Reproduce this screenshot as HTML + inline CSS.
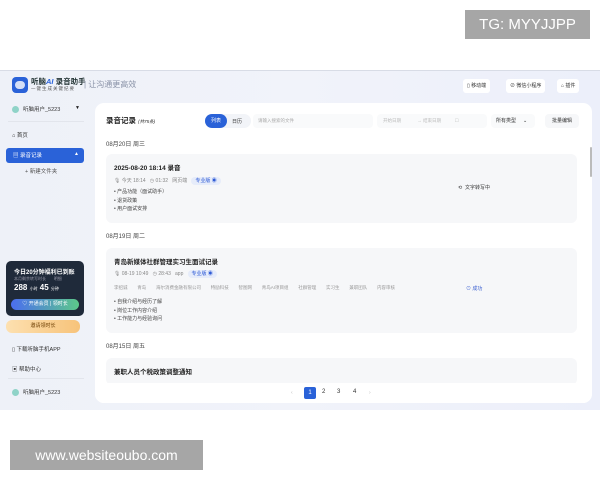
<!DOCTYPE html>
<html><head><meta charset="utf-8"><style>
*{margin:0;padding:0;box-sizing:border-box}
body{width:600px;height:480px;background:#fff;font-family:"Liberation Sans","Noto Sans CJK SC",sans-serif;position:relative;overflow:hidden;color:#222}
.a{position:absolute;white-space:nowrap}
.app{position:absolute;left:0;top:70px;width:600px;height:340px;background:linear-gradient(90deg,#eef1f8,#f1f3fa 50%,#eceffa);border-top:1px solid #d8dce6}
.card{position:absolute;left:95px;top:32px;width:497px;height:300px;background:#fff;border-radius:9px}
.rec{position:absolute;left:11px;width:471px;background:#f6f7f9;border-radius:6px}
.s{font-size:5px;color:#888}
.b{font-size:5px;color:#444}
.tag{background:#e6ecfa;color:#2f5bd6;border-radius:6px;padding:1px 4px;font-size:5px}
.pill{background:#fff;border-radius:3px;font-size:5px;color:#333;height:14px;line-height:14px;padding:0 4px}
</style></head><body>
<div class="a" style="left:465px;top:10px;width:125px;height:29px;background:#a6a6a6;color:#fff;font-size:15px;line-height:29px;text-align:center">TG: MYYJJPP</div>
<div class="a" style="left:10px;top:440px;width:193px;height:30px;background:#a6a6a6;color:#fff;font-size:14px;line-height:30px;text-align:center">www.websiteoubo.com</div>

<div class="app">
 <div class="a" style="left:12px;top:6px;width:16px;height:16px;background:#2a62d8;border-radius:4px"></div>
 <div class="a" style="left:15px;top:10px;width:10px;height:8px;background:#fff;border-radius:4px;opacity:.8"></div>
 <div class="a" style="left:31px;top:5px;font-size:7.5px;font-weight:bold;color:#233">听脑<i style="color:#2a62d8">AI</i> 录音助手</div>
 <div class="a" style="left:31px;top:15px;font-size:4.5px;color:#555;letter-spacing:1px">一键生成关键纪要</div>
 <div class="a" style="left:84px;top:8px;font-size:8px;color:#8a93a8">| 让沟通更高效</div>
 <div class="a pill" style="left:463px;top:8px">▯ 移动端</div>
 <div class="a pill" style="left:506px;top:8px">⊘ 微信小程序</div>
 <div class="a pill" style="left:557px;top:8px">⌂ 插件</div>

 <div class="a" style="left:12px;top:35px;width:7px;height:7px;border-radius:50%;background:#8fd3c8"></div>
 <div class="a" style="left:23px;top:34px;font-size:5.5px;color:#333">听脑用户_5223</div>
 <div class="a" style="left:75px;top:34px;font-size:5px">▼</div>
 <div class="a" style="left:8px;top:50px;width:76px;height:1px;background:#e2e5ec"></div>
 <div class="a" style="left:12px;top:60px;font-size:5.5px;color:#333">⌂ 首页</div>
 <div class="a" style="left:6px;top:77px;width:78px;height:15px;background:#2a62d8;border-radius:3px"></div>
 <div class="a" style="left:13px;top:80px;font-size:5.5px;color:#fff">▤ 录音记录</div>
 <div class="a" style="left:74px;top:80px;font-size:5px;color:#fff">▲</div>
 <div class="a" style="left:25px;top:96px;font-size:5.5px;color:#555">+ 新建文件夹</div>

 <div class="a" style="left:6px;top:190px;width:78px;height:55px;background:#1f2a3a;border-radius:5px"></div>
 <div class="a" style="left:14px;top:196px;font-size:6px;color:#fff;font-weight:bold">今日20分钟福利已到账</div>
 <div class="a" style="left:14px;top:205px;font-size:4px;color:#99a">本月剩余转写时长 &nbsp; &nbsp; &nbsp; 明细</div>
 <div class="a" style="left:14px;top:212px;font-size:8px;color:#fff;font-weight:bold">288 <span style="font-size:4px;font-weight:normal">小时</span> 45 <span style="font-size:4px;font-weight:normal">分钟</span></div>
 <div class="a" style="left:11px;top:228px;width:68px;height:11px;border-radius:6px;background:linear-gradient(90deg,#4b6ef0,#5cc88a);font-size:5px;color:#fff;text-align:center;line-height:11px">♡ 开通会员 | 领时长</div>
 <div class="a" style="left:6px;top:249px;width:74px;height:13px;border-radius:6px;background:linear-gradient(90deg,#fde0b0,#f7c37a);font-size:5px;color:#6b3d00;text-align:center;line-height:13px">邀请领时长</div>
 <div class="a" style="left:12px;top:274px;font-size:5.5px;color:#333">▯ 下载听脑手机APP</div>
 <div class="a" style="left:12px;top:294px;font-size:5.5px;color:#333">▣ 帮助中心</div>
 <div class="a" style="left:8px;top:307px;width:76px;height:1px;background:#e2e5ec"></div>
 <div class="a" style="left:12px;top:318px;width:7px;height:7px;border-radius:50%;background:#8fd3c8"></div>
 <div class="a" style="left:23px;top:317px;font-size:5.5px;color:#333">听脑用户_5223</div>

 <div class="card">
  <div class="a" style="left:11px;top:12px;font-size:7.5px;font-weight:bold">录音记录 <i style="font-size:4.5px;font-weight:normal">(共75条)</i></div>
  <div class="a" style="left:110px;top:11px;width:46px;height:14px;background:#f2f4f8;border-radius:7px"></div>
  <div class="a" style="left:110px;top:11px;width:22px;height:14px;background:#2a62d8;border-radius:7px;color:#fff;font-size:5px;text-align:center;line-height:14px">列表</div>
  <div class="a" style="left:137px;top:15px;font-size:5px;color:#333">日历</div>
  <div class="a" style="left:158px;top:11px;width:120px;height:14px;background:#f9fafb;border-radius:4px;font-size:4.5px;color:#aaa;line-height:14px;padding-left:5px">请输入搜索的文件</div>
  <div class="a" style="left:282px;top:11px;width:110px;height:14px;background:#f9fafb;border-radius:4px;font-size:4.5px;color:#bbb;line-height:14px;padding-left:6px">开始日期 &nbsp; &nbsp; &nbsp; &nbsp; &nbsp; &nbsp; → 结束日期 &nbsp; &nbsp; &nbsp; &nbsp; &nbsp; ☐</div>
  <div class="a" style="left:396px;top:11px;width:44px;height:14px;background:#f9fafb;border-radius:4px;font-size:5px;color:#333;line-height:14px;padding-left:5px">所有类型 &nbsp; &nbsp; ⌄</div>
  <div class="a" style="left:450px;top:11px;width:34px;height:14px;background:#f6f7f9;border-radius:4px;font-size:5px;color:#333;line-height:14px;text-align:center">批量编辑</div>
  <div class="a" style="left:11px;top:36px;font-size:6px;color:#444">08月20日 周三</div>
  <div class="a" style="left:495px;top:44px;width:2px;height:30px;background:#bbb;border-radius:1px"></div>

  <div class="rec" style="top:51px;height:69px">
   <div class="a" style="left:8px;top:8px;font-size:6.5px;font-weight:bold;color:#222">2025-08-20 18:14 录音</div>
   <div class="a s" style="left:8px;top:23px">🎙 今天 18:14 &nbsp; ◷ 01:32 &nbsp; 网页端 &nbsp; <span class="tag">专业版 ◉</span></div>
   <div class="a b" style="left:8px;top:34px;line-height:8.5px">• 产品功能（面试助手）<br>• 退货政策<br>• 用户面试安排</div>
   <div class="a b" style="left:352px;top:30px;color:#333">⟲ &nbsp;文字转写中</div>
  </div>

  <div class="a" style="left:11px;top:128px;font-size:6px;color:#444">08月19日 周二</div>
  <div class="rec" style="top:145px;height:85px">
   <div class="a" style="left:8px;top:8px;font-size:6.5px;font-weight:bold;color:#222">青岛新媒体社群管理实习生面试记录</div>
   <div class="a s" style="left:8px;top:22px">🎙 08-19 10:49 &nbsp; ◷ 28:43 &nbsp; app &nbsp; <span class="tag">专业版 ◉</span></div>
   <div class="a" style="left:8px;top:37px;font-size:4.5px;color:#999;word-spacing:2px">李招诚 &nbsp; 青岛 &nbsp; 海尔消费金融有限公司 &nbsp; 特励科技 &nbsp; 智图网 &nbsp; 青岛AI项目组 &nbsp; 社群管理 &nbsp; 实习生 &nbsp; 兼职团队 &nbsp; 内容审核</div>
   <div class="a" style="left:360px;top:37px;font-size:5px;color:#3a5fd0">⊙ 成功</div>
   <div class="a b" style="left:8px;top:50px;line-height:8.5px">• 自我介绍与经历了解<br>• 岗位工作内容介绍<br>• 工作能力与经验询问</div>
  </div>

  <div class="a" style="left:11px;top:238px;font-size:6px;color:#444">08月15日 周五</div>
  <div class="rec" style="top:255px;height:27px">
   <div class="a" style="left:8px;top:8px;font-size:6.5px;font-weight:bold;color:#222">兼职人员个税政策调整通知</div>
  </div>
  <div class="a" style="left:0;top:280px;width:497px;height:20px;background:#fff;border-radius:0 0 9px 9px"></div>
  <div class="a" style="left:196px;top:287px;font-size:5px;color:#bbb">‹</div>
  <div class="a" style="left:209px;top:284px;width:12px;height:12px;background:#2a62d8;border-radius:2px;color:#fff;font-size:6px;text-align:center;line-height:12px">1</div>
  <div class="a" style="left:227px;top:286px;font-size:6px;color:#333">2</div>
  <div class="a" style="left:242px;top:286px;font-size:6px;color:#333">3</div>
  <div class="a" style="left:258px;top:286px;font-size:6px;color:#333">4</div>
  <div class="a" style="left:274px;top:287px;font-size:5px;color:#bbb">›</div>
 </div>
</div>
</body></html>
